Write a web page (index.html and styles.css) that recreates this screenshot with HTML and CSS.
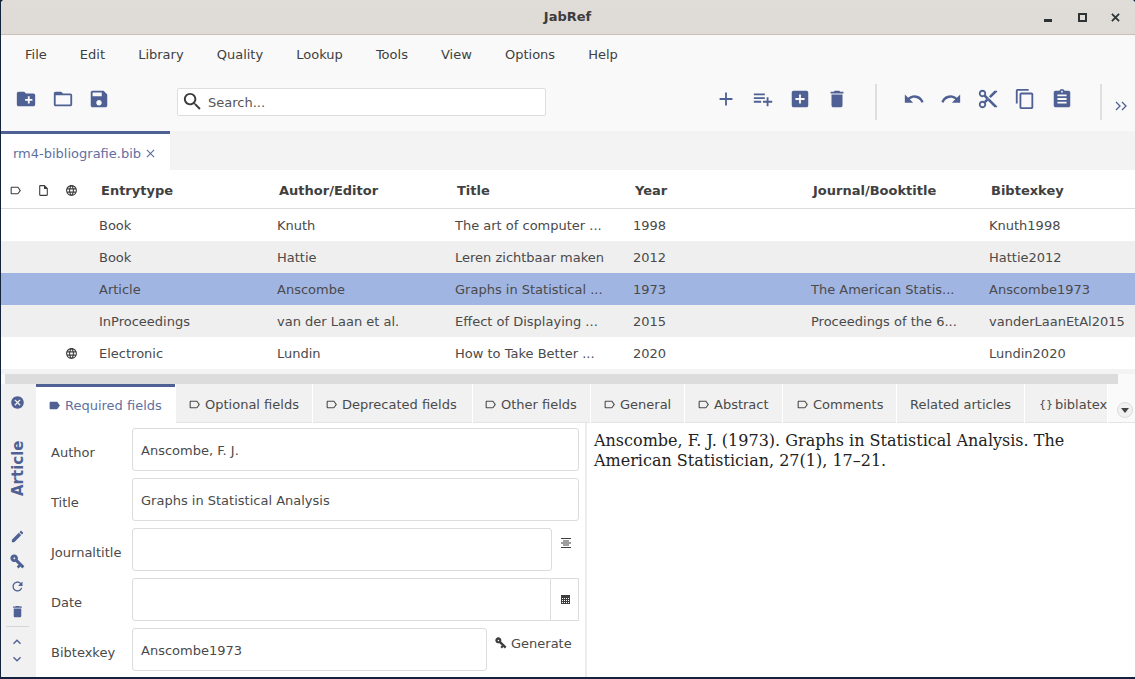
FILE: index.html
```html
<!DOCTYPE html>
<html lang="en">

<head>
    <meta charset="UTF-8">
    <meta name="viewport" content="width=device-width, initial-scale=1.0">
    <title>JabRef</title>
    <link rel="stylesheet" href="styles.css">
</head>

<body>
    <svg class="sprites" width="0" height="0">
        <symbol id="i-newlib" viewBox="0 0 24 24"><path d="M20 6h-8l-2-2H4c-1.11 0-1.99.89-1.99 2L2 18c0 1.11.89 2 2 2h16c1.11 0 2-.89 2-2V8c0-1.11-.89-2-2-2zm-1 8h-3v3h-2v-3h-3v-2h3V9h2v3h3v2z"/></symbol>
        <symbol id="i-open" viewBox="0 0 24 24"><path d="M20 6h-8l-2-2H4c-1.1 0-1.99.9-1.99 2L2 18c0 1.1.9 2 2 2h16c1.1 0 2-.9 2-2V8c0-1.1-.9-2-2-2zm0 12H4V8h16v10z"/></symbol>
        <symbol id="i-save" viewBox="0 0 24 24"><path d="M17 3H5c-1.11 0-2 .9-2 2v14c0 1.1.89 2 2 2h14c1.1 0 2-.9 2-2V7l-4-4zm-5 16c-1.66 0-3-1.34-3-3s1.34-3 3-3 3 1.34 3 3-1.34 3-3 3zm3-10H5V5h10v4z"/></symbol>
        <symbol id="i-search" viewBox="0 0 24 24"><path d="M15.5 14h-.79l-.28-.27C15.41 12.59 16 11.11 16 9.5 16 5.91 13.09 3 9.5 3S3 5.91 3 9.5 5.91 16 9.5 16c1.61 0 3.09-.59 4.23-1.57l.27.28v.79l5 4.99L20.49 19l-4.99-5zm-6 0C7.01 14 5 11.99 5 9.5S7.01 5 9.5 5 14 7.01 14 9.5 11.99 14 9.5 14z"/></symbol>
        <symbol id="i-add" viewBox="0 0 24 24"><path d="M19 13h-6v6h-2v-6H5v-2h6V5h2v6h6v2z"/></symbol>
        <symbol id="i-addlist" viewBox="0 0 24 24"><path d="M14 10H2v2h12v-2zm0-4H2v2h12V6zm4 8v-4h-2v4h-4v2h4v4h2v-4h4v-2h-4zM2 16h8v-2H2v2z"/></symbol>
        <symbol id="i-addbox" viewBox="0 0 24 24"><path d="M19 3H5c-1.11 0-2 .9-2 2v14c0 1.1.89 2 2 2h14c1.1 0 2-.9 2-2V5c0-1.1-.9-2-2-2zm-2 10h-4v4h-2v-4H7v-2h4V7h2v4h4v2z"/></symbol>
        <symbol id="i-delete" viewBox="0 0 24 24"><path d="M6 19c0 1.1.9 2 2 2h8c1.1 0 2-.9 2-2V7H6v12zM19 4h-3.5l-1-1h-5l-1 1H5v2h14V4z"/></symbol>
        <symbol id="i-undo" viewBox="0 0 24 24"><path d="M12.5 8c-2.65 0-5.05.99-6.9 2.6L2 7v9h9l-3.62-3.62c1.39-1.16 3.16-1.88 5.12-1.88 3.54 0 6.55 2.31 7.6 5.5l2.37-.78C21.08 11.03 17.15 8 12.5 8z"/></symbol>
        <symbol id="i-redo" viewBox="0 0 24 24"><path d="M18.4 10.6C16.55 8.99 14.15 8 11.5 8c-4.65 0-8.58 3.03-9.96 7.22L3.9 16c1.05-3.19 4.05-5.5 7.6-5.5 1.95 0 3.73.72 5.12 1.88L13 16h9V7l-3.6 3.6z"/></symbol>
        <symbol id="i-cut" viewBox="0 0 24 24"><path d="M9.64 7.64c.23-.5.36-1.05.36-1.64 0-2.21-1.79-4-4-4S2 3.79 2 6s1.79 4 4 4c.59 0 1.14-.13 1.64-.36L10 12l-2.36 2.36C7.14 14.13 6.59 14 6 14c-2.21 0-4 1.79-4 4s1.79 4 4 4 4-1.79 4-4c0-.59-.13-1.14-.36-1.64L12 14l7 7h3v-1L9.64 7.64zM6 8c-1.1 0-2-.89-2-2s.9-2 2-2 2 .89 2 2-.9 2-2 2zm0 12c-1.1 0-2-.89-2-2s.9-2 2-2 2 .89 2 2-.9 2-2 2zm6-7.500c-.28 0-.5-.22-.5-.5s.22-.5.5-.5.5.22.5.5-.22.5-.5.5zM19 3l-6 6 2 2 7-7V3h-3z"/></symbol>
        <symbol id="i-copy" viewBox="0 0 24 24"><path d="M16 1H4c-1.1 0-2 .9-2 2v14h2V3h12V1zm3 4H8c-1.1 0-2 .9-2 2v14c0 1.1.9 2 2 2h11c1.1 0 2-.9 2-2V7c0-1.1-.9-2-2-2zm0 16H8V7h11v14z"/></symbol>
        <symbol id="i-paste" viewBox="0 0 24 24"><path d="M19 3h-4.18C14.4 1.84 13.3 1 12 1c-1.3 0-2.4.84-2.82 2H5c-1.1 0-2 .9-2 2v14c0 1.1.9 2 2 2h14c1.1 0 2-.9 2-2V5c0-1.1-.9-2-2-2zm-7 0c.55 0 1 .45 1 1s-.45 1-1 1-1-.45-1-1 .45-1 1-1zm5 14H7v-2h10v2zm0-4H7v-2h10v2zm0-4H7V7h10v2z"/></symbol>
        <symbol id="i-label" viewBox="0 0 24 24"><path d="M17.63 5.84C17.27 5.33 16.67 5 16 5L5 5.01C3.9 5.01 3 5.9 3 7v10c0 1.1.9 1.99 2 1.99L16 19c.67 0 1.27-.33 1.63-.84L22 12l-4.37-6.16zM16 17H5V7h11l3.55 5L16 17z"/></symbol>
        <symbol id="i-labelfill" viewBox="0 0 24 24"><path d="M17.63 5.84C17.27 5.33 16.67 5 16 5L5 5.01C3.9 5.01 3 5.9 3 7v10c0 1.1.9 1.99 2 1.99L16 19c.67 0 1.27-.33 1.63-.84L22 12l-4.37-6.16z"/></symbol>
        <symbol id="i-file" viewBox="0 0 24 24"><path d="M14 2H6c-1.1 0-1.99.9-1.99 2L4 20c0 1.1.89 2 1.99 2H18c1.1 0 2-.9 2-2V8l-6-6zm4 18H6V4h7v5h5v11z"/></symbol>
        <symbol id="i-globe" viewBox="0 0 24 24"><path d="M11.99 2C6.47 2 2 6.48 2 12s4.47 10 9.99 10C17.52 22 22 17.52 22 12S17.52 2 11.99 2zm6.93 6h-2.95c-.32-1.25-.78-2.45-1.38-3.56 1.84.63 3.37 1.91 4.33 3.56zM12 4.04c.83 1.2 1.48 2.53 1.91 3.96h-3.82c.43-1.43 1.08-2.76 1.91-3.96zM4.26 14C4.1 13.36 4 12.69 4 12s.1-1.36.26-2h3.38c-.08.66-.14 1.32-.14 2 0 .68.06 1.34.14 2H4.26zm.82 2h2.95c.32 1.25.78 2.45 1.38 3.56-1.84-.63-3.37-1.9-4.33-3.56zm2.95-8H5.08c.96-1.66 2.49-2.93 4.33-3.56C8.81 5.55 8.35 6.75 8.03 8zM12 19.96c-.83-1.2-1.48-2.53-1.91-3.96h3.82c-.43 1.43-1.08 2.76-1.91 3.96zM14.34 14H9.66c-.09-.66-.16-1.32-.16-2 0-.68.07-1.35.16-2h4.68c.09.65.16 1.32.16 2 0 .68-.07 1.34-.16 2zm.25 5.56c.6-1.11 1.06-2.31 1.38-3.56h2.95c-.96 1.65-2.49 2.93-4.33 3.56zM16.36 14c.08-.66.14-1.32.14-2 0-.68-.06-1.34-.14-2h3.38c.16.64.26 1.31.26 2s-.1 1.36-.26 2h-3.38z"/></symbol>
        <symbol id="i-cancel" viewBox="0 0 24 24"><path d="M12 2C6.47 2 2 6.47 2 12s4.47 10 10 10 10-4.47 10-10S17.53 2 12 2zm5 13.59L15.59 17 12 13.41 8.41 17 7 15.59 10.59 12 7 8.41 8.41 7 12 10.59 15.59 7 17 8.41 13.41 12 17 15.59z"/></symbol>
        <symbol id="i-pencil" viewBox="0 0 24 24"><path d="M3 17.25V21h3.75L17.81 9.94l-3.75-3.75L3 17.25zM20.71 7.04c.39-.39.39-1.02 0-1.41l-2.34-2.34c-.39-.39-1.02-.39-1.41 0l-1.83 1.83 3.75 3.75 1.83-1.83z"/></symbol>
        <symbol id="i-key" viewBox="2 2 20 20"><path fill-rule="evenodd" transform="rotate(45 12 12)" d="M10.3 10A5 5 0 1 0 10.3 14H16v3.500h3.500V14H23v-4zM6 13.200a1.200 1.200 0 1 1 0-2.400 1.200 1.200 0 0 1 0 2.400z"/></symbol>
        <symbol id="i-refresh" viewBox="0 0 24 24"><path d="M17.65 6.35C16.2 4.9 14.21 4 12 4c-4.42 0-7.99 3.58-7.99 8s3.57 8 7.99 8c3.73 0 6.84-2.55 7.73-6h-2.08c-.82 2.33-3.04 4-5.65 4-3.31 0-6-2.69-6-6s2.69-6 6-6c1.66 0 3.14.69 4.22 1.78L13 11h7V4l-2.35 2.35z"/></symbol>
        <symbol id="i-up" viewBox="0 0 24 24"><path d="M7.41 15.41L12 10.83l4.59 4.58L18 14l-6-6-6 6z"/></symbol>
        <symbol id="i-down" viewBox="0 0 24 24"><path d="M7.41 8.59L12 13.17l4.59-4.58L18 10l-6 6-6-6z"/></symbol>
        <symbol id="i-multiline" viewBox="0 0 24 24"><path d="M2 2h20v2H2zM6 7h12v2H6zM2 11h20v2H2zM6 15h12v2H6zM2 20h20v2H2z"/></symbol>
        <symbol id="i-calendar" viewBox="-2 -1 11 11"><path fill-rule="evenodd" d="M0 0h9v9H0zM1 3v1h1V3zm2 0v1h1V3zm2 0v1h1V3zm2 0v1h1V3zM1 5v1h1V5zm2 0v1h1V5zm2 0v1h1V5zm2 0v1h1V5zM1 7v1h1V7zm2 0v1h1V7zm2 0v1h1V7zm2 0v1h1V7z"/></symbol>
    </svg>

    <div class="window">
        <header class="titlebar">
            <span class="titlebar-name">JabRef</span>
            <div class="wm-buttons">
                <span class="wm-min"></span>
                <span class="wm-max"></span>
                <svg class="wm-close" viewBox="0 0 10 10"><path d="M1 1l8 8M9 1l-8 8"/></svg>
            </div>
        </header>

        <nav class="menubar">
            <span>File</span>
            <span>Edit</span>
            <span>Library</span>
            <span>Quality</span>
            <span>Lookup</span>
            <span>Tools</span>
            <span>View</span>
            <span>Options</span>
            <span>Help</span>
        </nav>

        <div class="toolbar">
            <div class="tool-group tool-group-file">
                <svg class="tool"><use href="#i-newlib"/></svg>
                <svg class="tool"><use href="#i-open"/></svg>
                <svg class="tool"><use href="#i-save"/></svg>
            </div>
            <div class="search">
                <svg class="search-icon"><use href="#i-search"/></svg>
                <span class="search-text">Search...</span>
            </div>
            <div class="tool-group tool-group-entry">
                <svg class="tool"><use href="#i-add"/></svg>
                <svg class="tool"><use href="#i-addlist"/></svg>
                <svg class="tool"><use href="#i-addbox"/></svg>
                <svg class="tool"><use href="#i-delete"/></svg>
            </div>
            <div class="tool-sep"></div>
            <div class="tool-group tool-group-edit">
                <svg class="tool"><use href="#i-undo"/></svg>
                <svg class="tool"><use href="#i-redo"/></svg>
                <svg class="tool"><use href="#i-cut"/></svg>
                <svg class="tool"><use href="#i-copy"/></svg>
                <svg class="tool"><use href="#i-paste"/></svg>
            </div>
            <div class="tool-sep tool-sep-last"></div>
            <svg class="more" viewBox="0 0 14 12"><path d="M2 2l4 4-4 4M8 2l4 4-4 4"/></svg>
        </div>

        <div class="libtabs">
            <div class="libtab">
                <span>rm4-bibliografie.bib</span>
                <svg class="libtab-close" viewBox="0 0 10 10"><path d="M1 1l8 8M9 1l-8 8"/></svg>
            </div>
        </div>

        <section class="table">
            <div class="row row-head">
                <svg class="cell-icon"><use href="#i-label"/></svg>
                <svg class="cell-icon"><use href="#i-file"/></svg>
                <svg class="cell-icon"><use href="#i-globe"/></svg>
                <span>Entrytype</span>
                <span>Author/Editor</span>
                <span>Title</span>
                <span>Year</span>
                <span>Journal/Booktitle</span>
                <span>Bibtexkey</span>
            </div>
            <div class="row">
                <i></i><i></i><i></i>
                <span>Book</span>
                <span>Knuth</span>
                <span>The art of computer ...</span>
                <span>1998</span>
                <span></span>
                <span>Knuth1998</span>
            </div>
            <div class="row row-alt">
                <i></i><i></i><i></i>
                <span>Book</span>
                <span>Hattie</span>
                <span>Leren zichtbaar maken</span>
                <span>2012</span>
                <span></span>
                <span>Hattie2012</span>
            </div>
            <div class="row row-selected">
                <i></i><i></i><i></i>
                <span>Article</span>
                <span>Anscombe</span>
                <span>Graphs in Statistical ...</span>
                <span>1973</span>
                <span>The American Statis...</span>
                <span>Anscombe1973</span>
            </div>
            <div class="row row-alt">
                <i></i><i></i><i></i>
                <span>InProceedings</span>
                <span>van der Laan et al.</span>
                <span>Effect of Displaying ...</span>
                <span>2015</span>
                <span>Proceedings of the 6...</span>
                <span>vanderLaanEtAl2015</span>
            </div>
            <div class="row">
                <i></i><i></i>
                <svg class="cell-icon"><use href="#i-globe"/></svg>
                <span>Electronic</span>
                <span>Lundin</span>
                <span>How to Take Better ...</span>
                <span>2020</span>
                <span></span>
                <span>Lundin2020</span>
            </div>
            <div class="table-gap"></div>
            <div class="hscroll"><div class="hscroll-thumb"></div></div>
        </section>

        <section class="editor">
            <aside class="rail">
                <svg class="rail-icon rail-cancel"><use href="#i-cancel"/></svg>
                <div class="rail-type">Article</div>
                <svg class="rail-icon"><use href="#i-pencil"/></svg>
                <svg class="rail-icon"><use href="#i-key"/></svg>
                <svg class="rail-icon"><use href="#i-refresh"/></svg>
                <svg class="rail-icon"><use href="#i-delete"/></svg>
                <div class="rail-sep"></div>
                <svg class="rail-chevron"><use href="#i-up"/></svg>
                <svg class="rail-chevron"><use href="#i-down"/></svg>
            </aside>

            <div class="editor-main">
                <div class="tabs">
                    <div class="tab tab-active tab-w-required"><svg class="tab-icon"><use href="#i-labelfill"/></svg>Required fields</div>
                    <div class="tab tab-w-optional"><svg class="tab-icon"><use href="#i-label"/></svg>Optional fields</div>
                    <div class="tab tab-w-deprecated"><svg class="tab-icon"><use href="#i-label"/></svg>Deprecated fields</div>
                    <div class="tab tab-w-other"><svg class="tab-icon"><use href="#i-label"/></svg>Other fields</div>
                    <div class="tab tab-w-general"><svg class="tab-icon"><use href="#i-label"/></svg>General</div>
                    <div class="tab tab-w-abstract"><svg class="tab-icon"><use href="#i-label"/></svg>Abstract</div>
                    <div class="tab tab-w-comments"><svg class="tab-icon"><use href="#i-label"/></svg>Comments</div>
                    <div class="tab tab-w-related">Related articles</div>
                    <div class="tab tab-w-biblatex"><span class="braces">{}</span>biblatex</div>
                    <div class="tabs-menu"><span class="tabs-menu-arrow"></span></div>
                </div>

                <div class="panes">
                    <form class="fields">
                        <label>Author</label>
                        <div class="field-wide"><div class="input">Anscombe, F. J.</div></div>

                        <label>Title</label>
                        <div class="field-wide"><div class="input">Graphs in Statistical Analysis</div></div>

                        <label>Journaltitle</label>
                        <div class="field-journal">
                            <div class="input"></div>
                            <svg class="field-icon field-icon-top"><use href="#i-multiline"/></svg>
                        </div>

                        <label>Date</label>
                        <div class="field-date">
                            <div class="input"></div>
                            <div class="date-button"><svg class="calendar-icon"><use href="#i-calendar"/></svg></div>
                        </div>

                        <label>Bibtexkey</label>
                        <div class="field-key">
                            <div class="input">Anscombe1973</div>
                            <div class="generate"><svg class="generate-icon"><use href="#i-key"/></svg>Generate</div>
                        </div>
                    </form>

                    <article class="preview">Anscombe, F. J. (1973). Graphs in Statistical Analysis. The American Statistician, 27(1), 17–21.</article>
                </div>
            </div>
        </section>
    </div>
</body>

</html>
```

FILE: styles.css
```css
* {
    box-sizing: border-box;
}

html,
body {
    margin: 0;
    height: 100%;
    overflow: hidden;
}

body {
    background-color: #14233c;
    font-family: "DejaVu Sans", sans-serif;
    font-size: 13px;
    color: #4a4a4a;
}

.sprites {
    display: block;
    height: 0;
}

svg {
    fill: #4f6194;
    flex: none;
}

.window {
    display: flex;
    flex-direction: column;
    height: 677px;
    margin-left: 1px;
    background-color: #fff;
    border-radius: 4px 4px 0 0;
    overflow: hidden;
}

/* title bar */
.titlebar {
    height: 35px;
    flex: none;
    display: flex;
    align-items: center;
    justify-content: center;
    padding-bottom: 2px;
    background: linear-gradient(#e0dcd8, #dedad6);
    border-bottom: 1px solid #c9bfb8;
    position: relative;
}

.titlebar-name {
    font-weight: bold;
    font-size: 13px;
    color: #3d3d3d;
    margin-left: -1px;
}

.wm-buttons {
    position: absolute;
    right: 15px;
    top: 12px;
    display: flex;
    align-items: center;
    gap: 24px;
}

.wm-min {
    width: 8px;
    height: 3px;
    margin-top: 7px;
    margin-right: 2px;
    background-color: #2e3436;
}

.wm-max {
    width: 9px;
    height: 9px;
    border: 2px solid #2e3436;
}

.wm-close {
    width: 9px;
    height: 9px;
    fill: none;
    stroke: #2e3436;
    stroke-width: 2;
}

/* menu */
.menubar {
    height: 37px;
    flex: none;
    display: flex;
    align-items: center;
    padding-top: 2px;
    background-color: #f9f9f9;
    padding-left: 24px;
    gap: 33.1px;
    color: #3f3f3f;
}

/* toolbar */
.toolbar {
    height: 59px;
    flex: none;
    display: flex;
    align-items: center;
    background-color: #f9f9f9;
    position: relative;
}

.tool {
    width: 22px;
    height: 22px;
}

.tool-group {
    display: flex;
    align-items: center;
    margin-top: -5px;
}

.tool-group-file {
    margin-left: 14px;
    gap: 14.5px;
}

.search {
    width: 369px;
    height: 28px;
    margin-left: 67px;
    display: flex;
    align-items: center;
    gap: 4px;
    padding-left: 3px;
    background-color: #fff;
    border: 1px solid #dedede;
    border-radius: 2px;
    color: #555;
}

.search-text {
    padding-top: 2px;
}

.search-icon {
    width: 23px;
    height: 23px;
    fill: #3b3b3b;
}

.tool-group-entry {
    margin-left: 169px;
    gap: 15px;
}

.tool-sep {
    width: 2px;
    height: 36px;
    margin-left: 27px;
    background-color: #dfdfdf;
}

.tool-group-edit {
    margin-left: 26px;
    gap: 15px;
}

.tool-sep-last {
    margin-left: 27px;
}

.more {
    width: 14px;
    height: 12px;
    margin-left: 12px;
    margin-top: 9px;
    fill: none;
    stroke: #4f6194;
    stroke-width: 1.3;
}

/* library tabs */
.libtabs {
    height: 39px;
    flex: none;
    background-color: #f3f3f3;
}

.libtab {
    width: 169px;
    height: 39px;
    display: flex;
    align-items: center;
    gap: 5px;
    padding-left: 12px;
    padding-top: 3px;
    background-color: #fff;
    border-top: 3px solid #4f6194;
    color: #5f6f9f;
}

.libtab-close {
    width: 9px;
    height: 9px;
    fill: none;
    stroke: #5f6f9f;
    stroke-width: 1.3;
}

/* main table */
.table {
    flex: none;
}

.row {
    display: grid;
    grid-template-columns: 28px 28px 34px 178px 178px 178px 178px 178px 1fr;
    align-items: center;
    height: 32px;
    padding-left: 8px;
    white-space: nowrap;
}

.row-head {
    height: 39px;
    padding-top: 3px;
    border-bottom: 1px solid #dddddd;
    font-weight: bold;
    color: #404040;
}

.row-head span {
    padding-left: 2px;
}

.row-alt {
    background-color: #efefef;
}

.row-selected {
    background-color: #a1b5e3;
}

.cell-icon {
    width: 13px;
    height: 13px;
    fill: #3d3d3d;
}

.table-gap {
    height: 5px;
    background-color: #f3f3f3;
}

.hscroll {
    height: 10px;
    background-color: #fafafa;
    padding-left: 4px;
    padding-right: 17px;
}

.hscroll-thumb {
    height: 100%;
    background-color: #dcdcdc;
}

/* entry editor */
.editor {
    flex: 1;
    min-height: 0;
    display: flex;
}

.rail {
    width: 35px;
    flex: none;
    display: flex;
    flex-direction: column;
    align-items: center;
    padding-right: 3px;
    background-color: #f1f1f1;
}

.rail-icon {
    width: 15px;
    height: 15px;
    margin-bottom: 10px;
}

.rail-cancel {
    margin-top: 11px;
    margin-bottom: 0;
}

.rail-type {
    height: 119px;
    display: flex;
    align-items: center;
    justify-content: center;
    padding-top: 2px;
    margin-left: 2px;
    writing-mode: vertical-rl;
    transform: rotate(180deg);
    font-weight: bold;
    font-size: 15px;
    color: #4f6194;
}

.rail-sep {
    width: 23px;
    height: 1px;
    margin-top: -3px;
    margin-bottom: 7px;
    background-color: #d6d6d6;
}

.rail-chevron {
    width: 16px;
    height: 16px;
    margin-bottom: 1px;
}

.editor-main {
    flex: 1;
    min-width: 0;
    display: flex;
    flex-direction: column;
}

.tabs {
    height: 39px;
    flex: none;
    display: flex;
    background-color: #fff;
    position: relative;
    gap: 1px;
    overflow: hidden;
}

.tab {
    flex: none;
    display: flex;
    align-items: center;
    padding-left: 12px;
    padding-top: 2px;
    background-color: #f1f1f1;
    border-bottom: 1px solid #e4e4e4;
    white-space: nowrap;
}

.tab-active {
    padding-top: 0;
    background-color: #fff;
    border-top: 3px solid #4f6194;
    border-bottom: 0;
    color: #5f6f9f;
}

.tab-w-required { width: 139px; }
.tab-w-optional { width: 136px; }
.tab-w-deprecated { width: 159px; }
.tab-w-other { width: 117px; padding-left: 11px; }
.tab-w-general { width: 93px; }
.tab-w-abstract { width: 97px; }
.tab-w-comments { width: 113px; padding-left: 13px; }
.tab-w-related { width: 127px; padding-left: 13px; }
.tab-w-biblatex { width: 82px; padding-left: 14px; }

.tab-icon {
    width: 13px;
    height: 13px;
    margin-right: 4px;
    fill: #4a4a4a;
}

.tab-active .tab-icon {
    fill: #4f6194;
}

.braces {
    margin-right: 2px;
    font-size: 11px;
}

.tabs-menu {
    flex: 1;
    display: flex;
    align-items: flex-end;
    justify-content: center;
    padding-left: 6px;
    padding-bottom: 4px;
    background-color: #fafafa;
    border-bottom: 1px solid #e4e4e4;
}

.tabs-menu-arrow {
    width: 16px;
    height: 16px;
    border-radius: 50%;
    background-color: #f1f1f1;
    border: 1px solid #dcdcdc;
    position: relative;
}

.tabs-menu-arrow::after {
    content: "";
    position: absolute;
    left: 3px;
    top: 5px;
    border-left: 4px solid transparent;
    border-right: 4px solid transparent;
    border-top: 5px solid #444;
}

.panes {
    flex: 1;
    min-height: 0;
    display: flex;
}

.fields {
    width: 551px;
    flex: none;
    display: grid;
    grid-template-columns: 96px 1fr;
    grid-auto-rows: 43px;
    row-gap: 7px;
    padding: 5px 6px 0 0;
    align-items: center;
    background-color: #fff;
    border-right: 2px solid #ececec;
}

.fields label {
    padding-left: 15px;
    padding-top: 6px;
    color: #4a4a4a;
}

.field-wide,
.field-journal,
.field-date,
.field-key {
    display: flex;
    align-items: center;
    height: 43px;
}

.input {
    flex: 1;
    height: 43px;
    display: flex;
    align-items: center;
    padding: 1px 8px 0;
    background-color: #fff;
    border: 1px solid #dcdcdc;
    border-radius: 3px;
    color: #4a4a4a;
    min-width: 0;
}

.field-journal .input {
    flex: none;
    width: 420px;
}

.field-icon {
    width: 12px;
    height: 12px;
    fill: #3d3d3d;
}

.field-icon-top {
    margin-left: 8px;
    margin-top: -14px;
}

.field-date .input {
    border-radius: 3px 0 0 3px;
}

.date-button {
    width: 28px;
    height: 43px;
    display: flex;
    align-items: center;
    justify-content: center;
    border: 1px solid #dcdcdc;
    border-left: 0;
}

.calendar-icon {
    width: 11px;
    height: 11px;
    fill: #3d3d3d;
}

.field-key .input {
    flex: none;
    width: 355px;
}

.generate {
    display: flex;
    align-items: center;
    gap: 4px;
    margin-left: 8px;
    margin-top: -13px;
    white-space: nowrap;
}

.generate-icon {
    width: 12px;
    height: 12px;
    fill: #3d3d3d;
}

.preview {
    flex: 1;
    padding: 8px 8px 0 7px;
    font-family: "DejaVu Serif", serif;
    font-size: 16px;
    line-height: 20px;
    color: #222;
}
```
